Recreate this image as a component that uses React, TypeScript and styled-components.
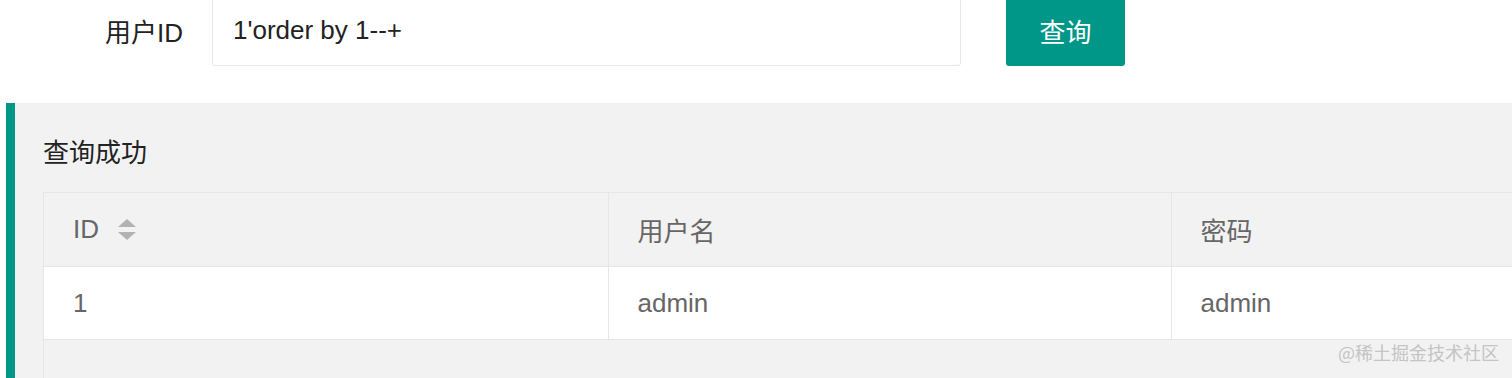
import React from "react";
import { styled, createGlobalStyle } from "styled-components";

const GlobalStyle = createGlobalStyle`
  html, body {
    margin: 0;
    padding: 0;
    background: #fff;
    overflow: hidden;
  }
  body {
    font-family: "Liberation Sans", "Noto Sans CJK SC", Arial, sans-serif;
  }
`;

const columns = [
  { key: "id", title: "ID", width: 564, sortable: true },
  { key: "username", title: "用户名", width: 563 },
  { key: "password", title: "密码", width: 600 },
];

const rows = [{ id: "1", username: "admin", password: "admin" }];

const App = () => {
  return (
    <Page>
      <GlobalStyle />
      <SearchForm>
        <Label>用户ID</Label>
        <Input defaultValue="1'order by 1--+" />
        <SearchButton>查询</SearchButton>
      </SearchForm>
      <Quote>
        <Title>查询成功</Title>
        <TableBox>
          <Table>
            <colgroup>
              {columns.map((c) => (
                <col key={c.key} style={{ width: c.width }} />
              ))}
            </colgroup>
            <thead>
              <tr>
                {columns.map((c) => (
                  <Th key={c.key}>
                    <HeadCell>
                      {c.title}
                      {c.sortable && (
                        <Sort>
                          <ArrowUp />
                          <ArrowDown />
                        </Sort>
                      )}
                    </HeadCell>
                  </Th>
                ))}
              </tr>
            </thead>
            <tbody>
              {rows.map((r) => (
                <tr key={r.id}>
                  <Td>{r.id}</Td>
                  <Td>{r.username}</Td>
                  <Td>{r.password}</Td>
                </tr>
              ))}
            </tbody>
          </Table>
        </TableBox>
        <Watermark>@稀土掘金技术社区</Watermark>
      </Quote>
    </Page>
  );
};

export default App;

const Page = styled.div`
  width: 1512px;
  height: 378px;
  overflow: hidden;
  position: relative;
`;

const SearchForm = styled.div`
  display: flex;
  align-items: center;
  height: 72px;
  margin-top: -6px;
`;

const Label = styled.div`
  width: 183px;
  padding-right: 29px;
  text-align: right;
  font-size: 26px;
  color: #222;
  font-family: "Liberation Sans", "Noto Sans CJK SC", sans-serif;
`;

const Input = styled.input`
  box-sizing: border-box;
  width: 749px;
  height: 72px;
  border: 1px solid #e6e6e6;
  border-radius: 3px;
  padding: 0 20px;
  font-size: 26px;
  color: #222;
  font-family: "Liberation Sans", "Noto Sans CJK SC", sans-serif;
  outline: none;
  background: #fff;
`;

const SearchButton = styled.button`
  margin-left: 45px;
  width: 119px;
  height: 72px;
  border: none;
  border-radius: 3px;
  background: #009688;
  color: #fff;
  font-size: 26px;
  font-family: "Noto Sans CJK SC", sans-serif;
  padding: 0;
  cursor: pointer;
`;

const Quote = styled.div`
  position: relative;
  margin: 37px 0 0 6px;
  border-left: 9px solid #009688;
  background: #f2f2f2;
  padding: 28px 0 0 28px;
  height: 400px;
`;

const Title = styled.div`
  line-height: 40px;
  font-size: 26px;
  color: #222;
  font-family: "Noto Sans CJK SC", sans-serif;
  margin-bottom: 21px;
`;

const TableBox = styled.div`
  border: 1px solid #e6e6e6;
  border-right: none;
  width: 1800px;
  height: 300px;
  background: #f2f2f2;
`;

const Table = styled.table`
  border-collapse: collapse;
  table-layout: fixed;
  width: 1727px;
  font-size: 26px;
  color: #666;
  font-family: "Liberation Sans", "Noto Sans CJK SC", sans-serif;
`;

const Th = styled.th`
  height: 73px;
  padding: 0 29px;
  text-align: left;
  font-weight: normal;
  background: #f2f2f2;
  border-left: 1px solid #e6e6e6;
  border-bottom: 1px solid #e6e6e6;
  &:first-child {
    border-left: none;
  }
`;

const HeadCell = styled.div`
  display: flex;
  align-items: center;
`;

const Sort = styled.span`
  display: inline-flex;
  flex-direction: column;
  gap: 5px;
  margin-left: 19px;
`;

const ArrowUp = styled.i`
  width: 0;
  height: 0;
  border-left: 9px solid transparent;
  border-right: 9px solid transparent;
  border-bottom: 8px solid #b2b2b2;
`;

const ArrowDown = styled.i`
  width: 0;
  height: 0;
  border-left: 9px solid transparent;
  border-right: 9px solid transparent;
  border-top: 8px solid #b2b2b2;
`;

const Td = styled.td`
  height: 72px;
  padding: 0 29px;
  background: #fff;
  border-left: 1px solid #e6e6e6;
  border-bottom: 1px solid #e6e6e6;
  &:first-child {
    border-left: none;
  }
`;

const Watermark = styled.div`
  position: absolute;
  left: 1323px;
  top: 236px;
  font-size: 18px;
  color: #c4c4c4;
  font-family: "Noto Sans CJK SC", sans-serif;
  white-space: nowrap;
`;
